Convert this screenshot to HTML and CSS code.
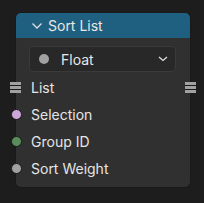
FILE: index.html
```html
<!DOCTYPE html>
<html>
<head><link rel="stylesheet" href="styles.css"></head>
<body>
<div class="node">
  <div class="header">
    <svg class="chev" width="12" height="8" viewBox="0 0 12 8"><path d="M1.5 1.5 L6 6 L10.5 1.5" fill="none" stroke="#e0e0e0" stroke-width="1.3"/></svg>
    <span>Sort List</span>
  </div>
  <div class="body">
    <div class="dropdown">
      <span class="ddot"></span>
      <span class="dtext">Float</span>
      <svg class="dchev" width="10" height="6" viewBox="0 0 10 6"><path d="M1 1 L5 4.5 L9 1" fill="none" stroke="#e0e0e0" stroke-width="1.3"/></svg>
    </div>
    <div class="row">
      <span class="list-sock left"><i></i><i></i><i></i></span>
      <span>List</span>
      <span class="list-sock right"><i></i><i></i><i></i></span>
    </div>
    <div class="row"><span class="sock pink"></span><span>Selection</span></div>
    <div class="row"><span class="sock green"></span><span>Group ID</span></div>
    <div class="row"><span class="sock gray"></span><span>Sort Weight</span></div>
  </div>
</div>
</body>
</html>
```
FILE: styles.css
```css
html, body { margin: 0; padding: 0; }
body {
  width: 204px; height: 203px;
  background: #1d1d1d;
  font-family: Inter, "DejaVu Sans", sans-serif;
  color: #e6e6e6;
  overflow: hidden;
}
.node {
  position: absolute;
  left: 16px; top: 13px;
  width: 174px;
  height: 174px;
  background: #303030;
  border-radius: 5px;
  box-shadow: 0 0 0 1px #1a1a1a;
}
.header {
  height: 25px;
  background: #1f5f80;
  border-radius: 5px 5px 0 0;
  display: flex;
  align-items: center;
  font-size: 14px;
  color: #e8e8e8;
}
.chev { margin-left: 15px; margin-right: 5px; }
.body { padding-top: 8px; position: relative; }
.dropdown {
  margin: 0 14px 0 13px;
  height: 24px;
  background: #282828;
  border: 1px solid #3a3a3a;
  border-radius: 4px;
  display: flex;
  align-items: center;
  font-size: 14px;
}
.ddot { width: 10px; height: 10px; border-radius: 50%; background: #a1a1a1; margin-left: 9px; }
.dtext { margin-left: 12px; flex: 1; }
.dchev { margin-right: 7px; }
.row {
  height: 27px;
  display: flex;
  align-items: center;
  position: relative;
  padding-left: 15px;
  font-size: 14px;
}
.row:nth-child(2) { margin-top: 2px; }
.sock {
  position: absolute; left: -5px;
  width: 9px; height: 9px; border-radius: 50%;
  border: 1px solid #1a1a1a;
}
.pink { background: #cca6d6; }
.green { background: #5a8c5c; }
.gray { background: #a1a1a1; }
.list-sock {
  position: absolute;
  width: 11px; height: 11px;
  display: flex; flex-direction: column; justify-content: space-between;
  background: #1a1a1a;
  padding: 0;
}
.list-sock.left { left: -6px; }
.list-sock.right { right: -6px; }
.list-sock i { display: block; height: 3px; background: #a1a1a1; }
```
